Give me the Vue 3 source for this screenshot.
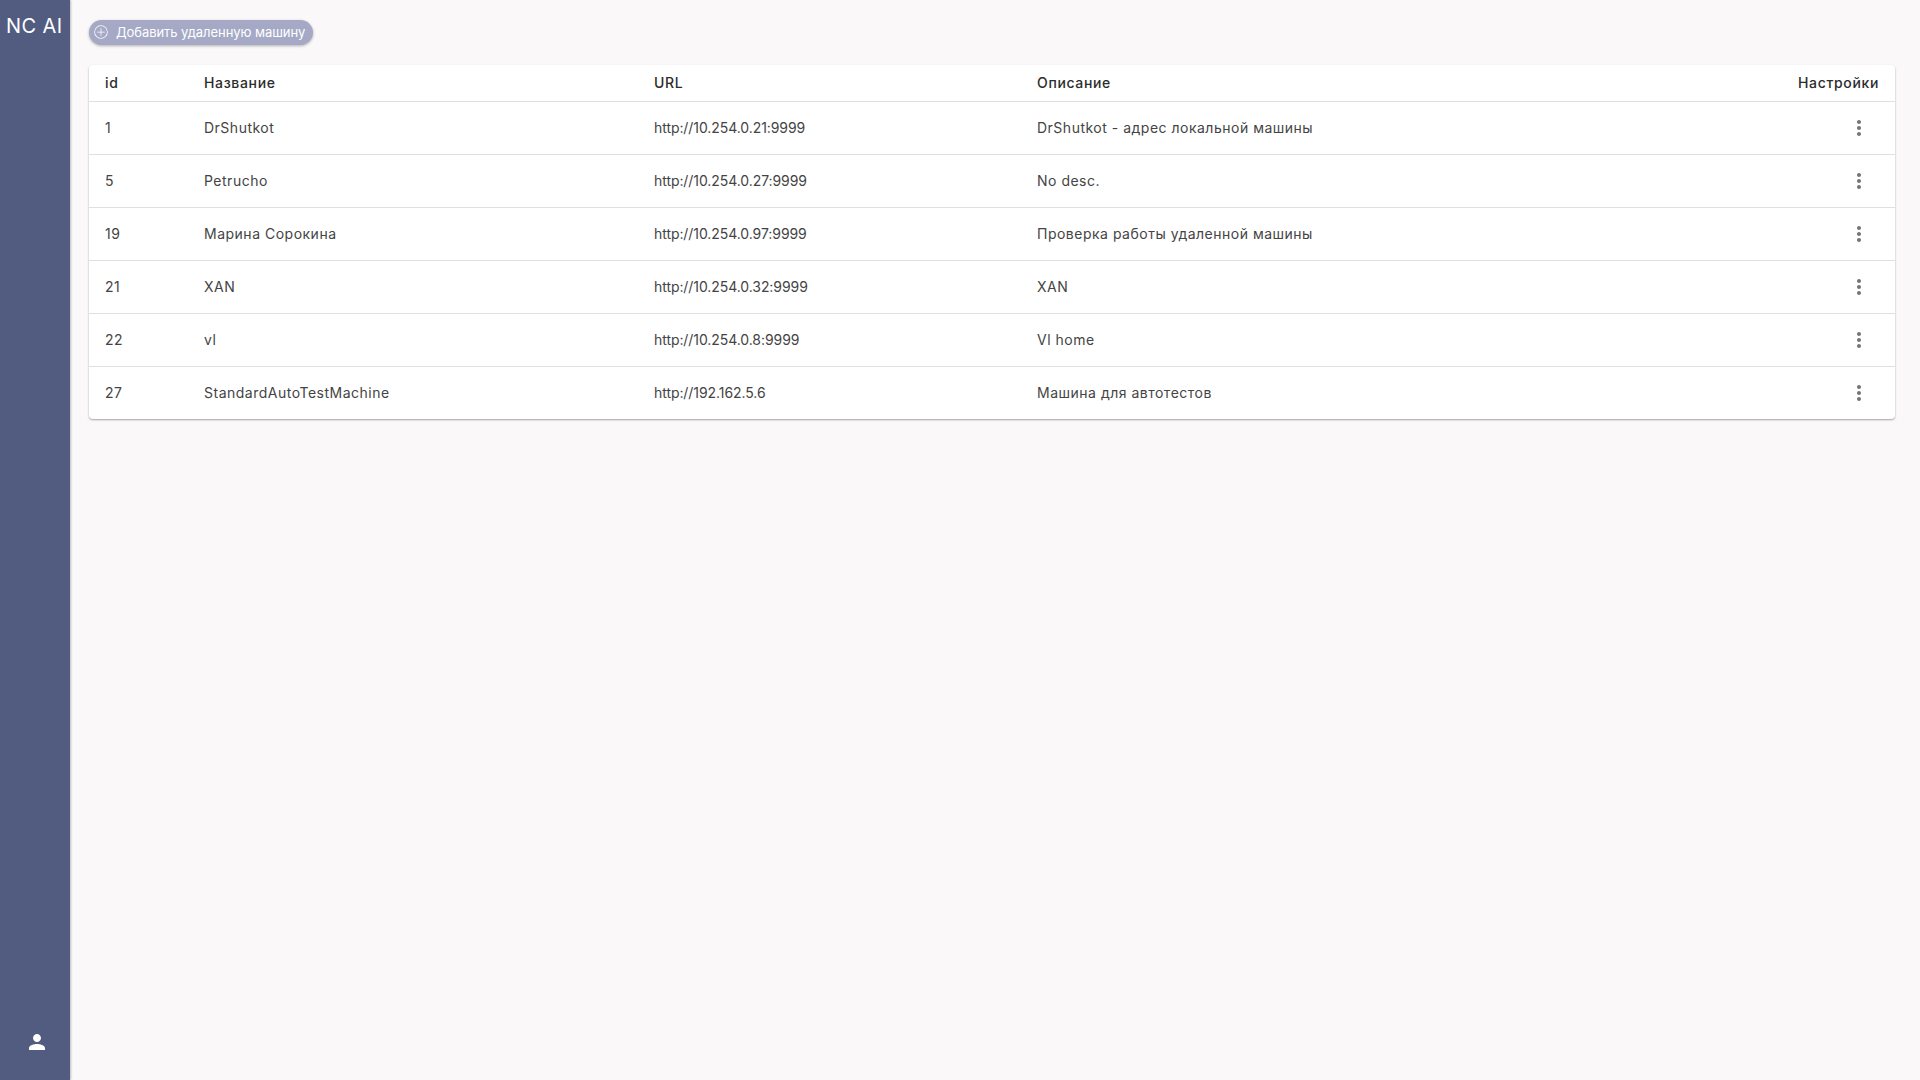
<script setup>
const rows = [
  { id: 1, name: 'DrShutkot', url: 'http://10.254.0.21:9999', desc: 'DrShutkot - адрес локальной машины' },
  { id: 5, name: 'Petrucho', url: 'http://10.254.0.27:9999', desc: 'No desc.' },
  { id: 19, name: 'Марина Сорокина', url: 'http://10.254.0.97:9999', desc: 'Проверка работы удаленной машины' },
  { id: 21, name: 'XAN', url: 'http://10.254.0.32:9999', desc: 'XAN' },
  { id: 22, name: 'vl', url: 'http://10.254.0.8:9999', desc: 'Vl home' },
  { id: 27, name: 'StandardAutoTestMachine', url: 'http://192.162.5.6', desc: 'Машина для автотестов' }
]
</script>

<template>
  <div class="app">
    <aside class="sidebar">
      <div class="logo">NC AI</div>
      <svg class="user" viewBox="0 0 24 24" width="24" height="24">
        <path fill="#fff" d="M12 12c2.21 0 4-1.79 4-4s-1.79-4-4-4-4 1.79-4 4 1.79 4 4 4zm0 2c-2.67 0-8 1.34-8 4v2h16v-2c0-2.66-5.33-4-8-4z" />
      </svg>
    </aside>
    <main class="main">
      <button class="add">
        <svg viewBox="0 0 24 24" width="18" height="18">
          <path fill="#fff" d="M12.5 7h-1v4.5H7v1h4.500V17h1v-4.500H17v-1h-4.500V7zM12 3a9 9 0 1 0 0 18 9 9 0 0 0 0-18zm0 17a8 8 0 1 1 0-16 8 8 0 0 1 0 16z" />
        </svg>
        <span>Добавить удаленную машину</span>
      </button>
      <div class="card">
        <table>
          <colgroup>
            <col class="c-id" /><col class="c-name" /><col class="c-url" /><col />
            <col class="c-set" />
          </colgroup>
          <thead>
            <tr>
              <th>id</th><th>Название</th><th>URL</th><th>Описание</th>
              <th class="right">Настройки</th>
            </tr>
          </thead>
          <tbody>
            <tr v-for="r in rows" :key="r.id">
              <td>{{ r.id }}</td>
              <td>{{ r.name }}</td>
              <td class="url">{{ r.url }}</td>
              <td>{{ r.desc }}</td>
              <td class="right">
                <svg class="more" viewBox="0 0 24 24" width="24" height="24">
                  <path fill="#757575" d="M12 8c1.100 0 2-.9 2-2s-.9-2-2-2-2 .9-2 2 .9 2 2 2zm0 2c-1.100 0-2 .9-2 2s.9 2 2 2 2-.9 2-2-.9-2-2-2zm0 6c-1.100 0-2 .9-2 2s.9 2 2 2 2-.9 2-2-.9-2-2-2z" />
                </svg>
              </td>
            </tr>
          </tbody>
        </table>
      </div>
    </main>
  </div>
</template>

<style>
html, body { margin: 0; background: #faf8f9; }
</style>

<style scoped>
.app {
  display: flex;
  height: 1080px;
  overflow: hidden;
  background: #faf8f9;
  font-family: Inter, "Noto Sans", sans-serif;
  color: #333;
}
.sidebar {
  width: 70px;
  flex: none;
  background: #525c81;
  box-shadow: 1px 0 2px rgba(0, 0, 0, 0.25);
  display: flex;
  flex-direction: column;
  justify-content: space-between;
}
.logo {
  color: #fff;
  font-size: 20px;
  line-height: 24px;
  margin: 14px 0 0 6px;
  white-space: nowrap;
  letter-spacing: 0.4px;
}
.user { margin: 0 0 26px 25px; }
.main {
  flex: 1;
  min-width: 0;
  padding: 20px 25px 0 19px;
}
.add {
  display: flex;
  align-items: center;
  gap: 6px;
  height: 25px;
  width: 224px;
  padding: 0 0 2px 3px;
  border: 0;
  border-radius: 13px;
  background: #a5a9c6;
  color: #fff;
  font: inherit;
  font-size: 13px;
  letter-spacing: -0.06px;
  white-space: nowrap;
  box-shadow: 0 1px 3px rgba(0, 0, 0, 0.3);
}
.add svg { flex: none; }
.card {
  margin-top: 20px;
  background: #fff;
  border-radius: 4px;
  box-shadow: 0 1px 2px rgba(0, 0, 0, 0.35);
  overflow: hidden;
}
table {
  width: 100%;
  table-layout: fixed;
  border-collapse: collapse;
  font-size: 14px;
  letter-spacing: 0.5px;
}
.c-id { width: 99px; }
.c-name { width: 450px; }
.c-url { width: 383px; }
.c-set { width: 130px; }
th, td {
  padding: 0 16px 2px;
  text-align: left;
  white-space: nowrap;
  border-bottom: 1px solid #e0e0e0;
}
th {
  height: 34px;
  font-weight: 500;
  color: #2c2c2c;
  letter-spacing: 0.65px;
}
td { height: 50px; font-weight: 400; color: #444; }
td.url { letter-spacing: -0.07px; }
tbody tr:last-child td { border-bottom: 0; }
.right { text-align: right; }
.more { display: inline-block; vertical-align: middle; margin-right: 8px; margin-top: 2px; }
</style>
